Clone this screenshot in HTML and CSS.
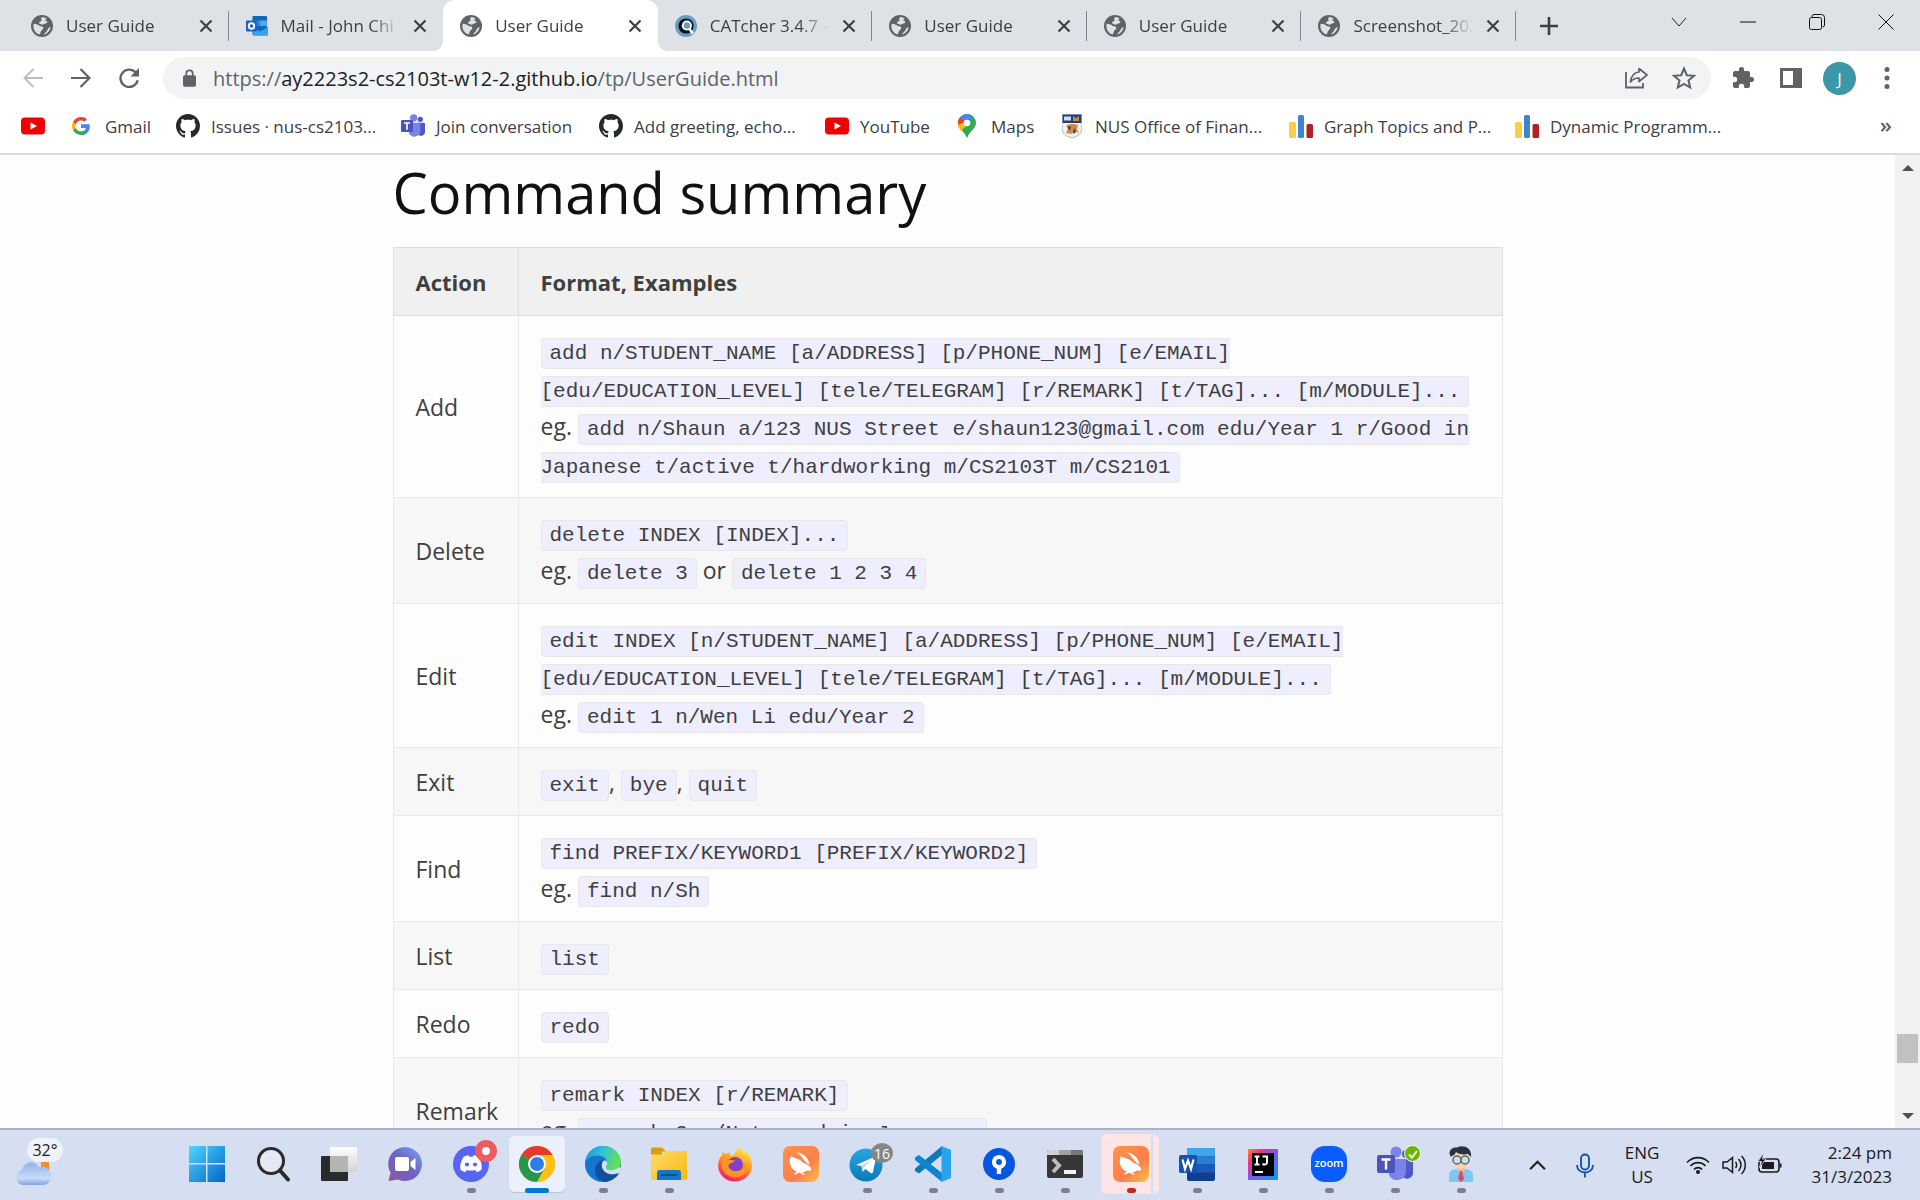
FILE: index.html
```html
<!DOCTYPE html>
<html lang="en">
<head>
<meta charset="utf-8">
<title>User Guide</title>
<link rel="stylesheet" href="styles.css">
</head>
<body>
<svg class="defs" aria-hidden="true">
  <defs>
    <linearGradient id="gWin" x1="0" y1="0" x2="1" y2="1"><stop offset="0" stop-color="#4fd6ff"/><stop offset="1" stop-color="#0067c8"/></linearGradient>
    <linearGradient id="gBlue" x1="0" y1="0" x2="0" y2="1"><stop offset="0" stop-color="#2aa5e0"/><stop offset="1" stop-color="#0a7ab8"/></linearGradient>
    <linearGradient id="gChat" x1="0" y1="1" x2="1" y2="0"><stop offset="0" stop-color="#8a5aa8"/><stop offset=".5" stop-color="#6a62c4"/><stop offset="1" stop-color="#78a8f5"/></linearGradient>
    <linearGradient id="gCloud" x1="0" y1="0" x2="0" y2="1"><stop offset="0" stop-color="#8fb2ee"/><stop offset=".7" stop-color="#c9dcf8"/><stop offset="1" stop-color="#7fa4e8"/></linearGradient>
    <linearGradient id="gFox" x1="0.7" y1="0" x2="0.3" y2="1"><stop offset="0" stop-color="#fff14a"/><stop offset=".45" stop-color="#ff9a1f"/><stop offset="1" stop-color="#f0146a"/></linearGradient>
    <linearGradient id="gEdge" x1="0" y1="0" x2="1" y2="0.3"><stop offset="0" stop-color="#1b8fe0"/><stop offset=".5" stop-color="#2fc1d6"/><stop offset="1" stop-color="#62e05a"/></linearGradient>
    <linearGradient id="gFold" x1="0" y1="0" x2="1" y2="1"><stop offset="0" stop-color="#ffdc6a"/><stop offset="1" stop-color="#f8b80e"/></linearGradient>
    <linearGradient id="gBird" x1="0" y1="0" x2="1" y2="1"><stop offset="0" stop-color="#ff9448"/><stop offset=".6" stop-color="#fb7f4b"/><stop offset="1" stop-color="#ffc04a"/></linearGradient>
    <linearGradient id="gIJ" x1="0" y1="0" x2="1" y2="1"><stop offset="0" stop-color="#ff8a1e"/><stop offset=".25" stop-color="#f0308a"/><stop offset=".5" stop-color="#7a5af0"/><stop offset="1" stop-color="#0a9af5"/></linearGradient>
    <linearGradient id="gWhite" x1="0" y1="0" x2="0" y2="1"><stop offset="0" stop-color="#fff"/><stop offset="1" stop-color="#d4d4d4"/></linearGradient>
    <symbol id="globe" viewBox="0 0 24 24"><circle cx="12" cy="12" r="12" fill="#5f6368"/><path d="M3 9.5c3 0 5 1 6.500 2.500 2 .3 3.500.5 4 2-.3 2.200-2.500 2.500-3 4.500-.4 1.300-.6 2-1.200 2.800C5.300 20 2.600 16.500 2.600 12c0-.9.200-1.700.4-2.500zM11.500 2.600c1.800-.2 4 .2 5.500 1.200-.4 1-1.600 1.300-2 2.200 1.500 0 2.800.500 3 1.900-1 1.400-3 1.100-4.200 2.300C12.600 11.200 11 9.900 9.300 9.600 8 8 9.400 7 11 6.600c1.500-.6-.6-1.600.5-4zM21.400 13c-.4 4-3.400 7.400-7.200 8.200 1.200-2 2.600-2.400 3.400-4.200.6-1.700 1.500-3.600 3.800-4z" fill="#dee1e6"/></symbol>
    <symbol id="x" viewBox="0 0 14 14"><path d="M1.500 1.500l11 11M12.500 1.500l-11 11" stroke="#3c4043" stroke-width="2.200" fill="none"/></symbol>
    <symbol id="github" viewBox="0 0 16 16"><path fill="#24292f" d="M8 0C3.580 0 0 3.580 0 8c0 3.540 2.290 6.530 5.470 7.590.4.070.55-.17.55-.38 0-.19-.01-.82-.01-1.490-2.010.37-2.530-.49-2.690-.94-.09-.23-.48-.94-.82-1.130-.28-.15-.68-.52-.01-.53.63-.01 1.080.58 1.230.82.72 1.210 1.870.87 2.330.66.070-.52.280-.87.510-1.070-1.780-.2-3.640-.89-3.640-3.950 0-.87.310-1.590.82-2.150-.08-.2-.36-1.020.080-2.120 0 0 .67-.21 2.200.82.64-.18 1.320-.27 2-.27s1.360.09 2 .27c1.530-1.040 2.200-.82 2.200-.82.44 1.100.16 1.920.080 2.120.51.56.82 1.270.82 2.150 0 3.070-1.870 3.750-3.650 3.950.29.25.54.73.54 1.480 0 1.070-.01 1.930-.01 2.200 0 .21.150.46.55.38A8.010 8.010 0 0 0 16 8c0-4.420-3.580-8-8-8z"/></symbol>
    <symbol id="yt" viewBox="0 0 24 24"><rect y="3.500" width="24" height="17" rx="4" fill="#f00000"/><path d="M9.500 8.500v7l6.500-3.500z" fill="#fff"/></symbol>
    <symbol id="teams" viewBox="0 0 36 36"><circle cx="29" cy="8" r="4" fill="#5059c9"/><circle cx="19" cy="6" r="5.500" fill="#7b83eb"/><path d="M24 13h10a2 2 0 0 1 2 2v10a6 6 0 0 1-12 3z" fill="#5059c9"/><path d="M12 13h17v13a9 9 0 0 1-17 3z" fill="#7b83eb"/><rect y="9" width="18" height="18" rx="2" fill="#4b53bc"/><path d="M4.500 13.500h9M9 13.500v10" stroke="#fff" stroke-width="2.400"/></symbol>
    <symbol id="bars" viewBox="0 0 24 24"><rect y="8" width="7" height="16" rx="1.500" fill="#f5cf4c"/><rect x="9" y="1" width="6" height="23" rx="1.500" fill="#3d86cc"/><rect x="17.500" y="10" width="6.500" height="14" rx="1.500" fill="#b31f24"/></symbol>
    <symbol id="bird" viewBox="0 0 36 36"><rect width="36" height="36" rx="7" fill="url(#gBird)"/><path d="M7.500 10.500C12 12 17 13 20.500 17c2 .8 4.500 1.600 6 3.200 1.500 1.300 2 3 1.500 4.300-1.500.2-2.700-.3-4 .2-1.800.9-3 1.500-4.800 1.400l3 2.900c-2.500-.3-4.500-1.400-6-2.500-1.800 1.400-3.700 2.200-5.700 1.600 1.500-.6 2.500-1.400 3-2.500C7.500 23 5.500 17 7.500 10.500z" fill="#fff"/><path d="M13.500 6.500C20 7 25.500 11.500 26.500 18.500 21.500 17 20.500 10.500 13.500 6.500z" fill="#fff"/></symbol>
  </defs>
</svg>

<header class="browser">
  <div class="strip">
    <nav class="tabs" aria-label="Tabs">
      <div class="tab"><svg class="fav"><use href="#globe"/></svg><span class="tab-name">User Guide</span><button class="close" aria-label="Close tab"><svg><use href="#x"/></svg></button></div>
      <div class="tab bare"><svg class="fav" viewBox="0 0 24 24"><rect x="7" y="1" width="16" height="21" rx="1.500" fill="#1066b8"/><path d="M15 6h8v6h-8z" fill="#50a8ec"/><path d="M7 6h8v6H7z" fill="#2b88d8"/><path d="M7 13l8 5 9-5v9.500H8z" fill="#3ba3ea"/><rect y="6" width="12" height="12" rx="1" fill="#1b62c4"/><circle cx="6" cy="12" r="3" fill="none" stroke="#fff" stroke-width="2"/></svg><span class="tab-name">Mail - John Chi</span><button class="close" aria-label="Close tab"><svg><use href="#x"/></svg></button></div>
      <div class="tab active"><svg class="fav"><use href="#globe"/></svg><span class="tab-name">User Guide</span><button class="close" aria-label="Close tab"><svg><use href="#x"/></svg></button></div>
      <div class="tab"><svg class="fav" viewBox="0 0 24 24"><circle cx="12" cy="12" r="12" fill="#6b9cc4"/><circle cx="12" cy="12" r="6.500" fill="none" stroke="#111" stroke-width="3.600"/><circle cx="13" cy="11.500" r="4.500" fill="#6b9cc4" stroke="#fff" stroke-width="2"/><path d="M15.500 15l4 5" stroke="#fff" stroke-width="3"/></svg><span class="tab-name">CATcher 3.4.7 -</span><button class="close" aria-label="Close tab"><svg><use href="#x"/></svg></button></div>
      <div class="tab"><svg class="fav"><use href="#globe"/></svg><span class="tab-name">User Guide</span><button class="close" aria-label="Close tab"><svg><use href="#x"/></svg></button></div>
      <div class="tab"><svg class="fav"><use href="#globe"/></svg><span class="tab-name">User Guide</span><button class="close" aria-label="Close tab"><svg><use href="#x"/></svg></button></div>
      <div class="tab"><svg class="fav"><use href="#globe"/></svg><span class="tab-name">Screenshot_202</span><button class="close" aria-label="Close tab"><svg><use href="#x"/></svg></button></div>
    </nav>
    <button class="new-tab" aria-label="New tab"><svg viewBox="0 0 18 18"><path d="M9 0v18M0 9h18" stroke="#3c4043" stroke-width="2.600"/></svg></button>
    <div class="win">
      <button aria-label="Search tabs"><svg viewBox="0 0 16 16"><path d="M1 4l7 8 7-8" stroke="#222" fill="none"/></svg></button>
      <button aria-label="Minimize"><svg viewBox="0 0 16 16"><path d="M0 8h16" stroke="#111"/></svg></button>
      <button aria-label="Restore"><svg viewBox="0 0 16 16"><rect x=".5" y="3.500" width="12" height="12" rx="2" stroke="#111" fill="none"/><path d="M3 3V2.500A2 2 0 0 1 5 .5h7.500a3 3 0 0 1 3 3V11a2 2 0 0 1-2 2" stroke="#111" fill="none"/></svg></button>
      <button aria-label="Close"><svg viewBox="0 0 16 16"><path d="M.5.5l15 15M15.500.5l-15 15" stroke="#111"/></svg></button>
    </div>
  </div>

  <div class="toolbar">
    <button class="nav-btn" aria-label="Back"><svg viewBox="0 0 20 20"><path d="M20 10H2M10.500 1L1.500 10l9 9" stroke="#bbbdc0" stroke-width="2" fill="none"/></svg></button>
    <button class="nav-btn" aria-label="Forward"><svg viewBox="0 0 20 20"><path d="M0 10h18M9.500 1l9 9-9 9" stroke="#5f6368" stroke-width="2.200" fill="none"/></svg></button>
    <button class="nav-btn" aria-label="Reload"><svg viewBox="0 0 20 20"><path d="M17.500 5.500A8.700 8.700 0 1 0 18.700 12.300" stroke="#5f6368" stroke-width="2.400" fill="none"/><path d="M20 0v8.500h-8.500z" fill="#5f6368"/></svg></button>
    <div class="omnibox">
      <svg class="lock" viewBox="0 0 12 16"><rect y="5.500" width="12" height="10.500" rx="1.500" fill="#5f6368"/><path d="M3 6V4a3 3 0 0 1 6 0v2" stroke="#5f6368" stroke-width="1.600" fill="none"/></svg>
      <a class="url" href="#">https://<span class="host">ay2223s2-cs2103t-w12-2.github.io</span>/tp/UserGuide.html</a>
      <button class="tool" aria-label="Share"><svg viewBox="0 0 24 24"><path d="M2 6v15.500h17V17" stroke="#5f6368" stroke-width="1.800" fill="none"/><path d="M15 2.500l8 6.500-8 6.500V12c-4 0-6.500 1.300-8.500 4C7 10.500 10 6.500 15 6z" stroke="#5f6368" stroke-width="1.700" fill="none" stroke-linejoin="round"/></svg></button>
      <button class="tool" aria-label="Bookmark this tab"><svg viewBox="0 0 24 24"><path d="M12 2.500l2.800 6.700 7.200.6-5.500 4.700 1.700 7L12 17.800l-6.200 3.700 1.700-7L2 9.800l7.200-.6z" stroke="#5f6368" stroke-width="2" fill="none"/></svg></button>
    </div>
    <button class="ext" aria-label="Extensions"><svg viewBox="0 0 24 24"><path fill="#5f6368" d="M20.500 11H19V7a2 2 0 0 0-2-2h-4V3.500a2.500 2.500 0 0 0-5 0V5H4a2 2 0 0 0-2 2v3.800h1.500a2.700 2.700 0 0 1 0 5.400H2V20a2 2 0 0 0 2 2h3.800v-1.500a2.700 2.700 0 0 1 5.400 0V22H17a2 2 0 0 0 2-2v-4h1.500a2.500 2.500 0 0 0 0-5z"/></svg></button>
    <button class="ext" aria-label="Side panel"><svg viewBox="0 0 24 24"><path fill="#5f6368" fill-rule="evenodd" d="M1 2h22v20H1zM4 5v14h10V5z"/></svg></button>
    <button class="ext avatar" aria-label="Profile">J</button>
    <button class="ext" aria-label="Menu"><svg viewBox="0 0 24 24"><g fill="#5f6368"><circle cx="12" cy="3.500" r="2.500"/><circle cx="12" cy="12" r="2.500"/><circle cx="12" cy="20.500" r="2.500"/></g></svg></button>
  </div>

  <nav class="bookmarks" aria-label="Bookmarks">
    <a href="#" aria-label="YouTube home"><svg><use href="#yt"/></svg></a>
    <a href="#" class="narrow"><svg viewBox="0 0 18 18"><path d="M17.600 7.300H9v3.600h5c-.5 2.200-2.400 3.600-5 3.600v3.500c5 0 8.800-3.300 8.800-8.800 0-.7-.1-1.300-.2-1.900z" fill="#4285f4"/><path d="M.9 13.100C2.500 16 5.500 18 9 18c2.400 0 4.500-.8 6-2.200l-2.900-2.300c-2.400 1.900-7 1.300-8.300-2.700z" fill="#34a853"/><path d="M3.800 10.800a5.500 5.500 0 0 1 0-3.600L.9 4.900a9 9 0 0 0 0 8.200z" fill="#fbbc05"/><path d="M15 2.300C11.500-1.200 4-.8.900 4.900l2.900 2.300C5 3.300 9.800 2.200 12.500 4.800z" fill="#ea4335"/></svg><span>Gmail</span></a>
    <a href="#"><svg><use href="#github"/></svg><span>Issues · nus-cs2103...</span></a>
    <a href="#"><svg><use href="#teams"/></svg><span>Join conversation</span></a>
    <a href="#"><svg><use href="#github"/></svg><span>Add greeting, echo...</span></a>
    <a href="#"><svg><use href="#yt"/></svg><span>YouTube</span></a>
    <a href="#" class="narrow"><svg viewBox="0 0 18 24"><path d="M9 0a9 9 0 0 1 9 9c0 5.500-6 7.500-9 15C6 16.500 0 14.500 0 9a9 9 0 0 1 9-9z" fill="#34a853"/><path d="M2 3.500A9 9 0 0 1 15.800 3L9 9z" fill="#4285f4"/><path d="M2 3.300L7 8 1.500 14A9 9 0 0 1 2 3.300z" fill="#ea4335"/><path d="M10 10l-7 7C1 14.500 0 12.500.2 10.500L5 9z" fill="#fbbc04"/><circle cx="9" cy="9" r="3.300" fill="#fff"/></svg><span>Maps</span></a>
    <a href="#" class="crest"><svg viewBox="0 0 20 24"><path d="M0 0h20v14c0 6-5 8.500-10 10C5 22.500 0 20 0 14z" fill="#f2f2f0" stroke="#9aa4b8" stroke-width=".8"/><path d="M.5.5h19V9H.5z" fill="#21427c"/><path d="M2 2.500h7v4H2z" fill="#d8dde6"/><path d="M11 2l3 2 3-2v5h-6z" fill="#c98645"/><path d="M4 12c4-3 9-2 12-1l-1 4 2 4-4-2-4 3-5-1 2-4z" fill="#d8893c"/><path d="M6 12l3 1-2 4zM12 14l2 4-3 2z" fill="#1d3767"/></svg><span>NUS Office of Finan...</span></a>
    <a href="#"><svg><use href="#bars"/></svg><span>Graph Topics and P...</span></a>
    <a href="#"><svg><use href="#bars"/></svg><span>Dynamic Programm...</span></a>
    <button class="more" aria-label="More bookmarks">»</button>
  </nav>
</header>

<div class="viewport">
  <main class="page">
    <div class="column">
      <h1>Command summary</h1>
      <table>
        <colgroup><col class="c-action"><col></colgroup>
        <thead><tr><th>Action</th><th>Format, Examples</th></tr></thead>
        <tbody>
          <tr><td>Add</td><td><code>add n/STUDENT_NAME [a/ADDRESS] [p/PHONE_NUM] [e/EMAIL] [edu/EDUCATION_LEVEL] [tele/TELEGRAM] [r/REMARK] [t/TAG]... [m/MODULE]...</code><br>eg. <code>add n/Shaun a/123 NUS Street e/shaun123@gmail.com edu/Year 1 r/Good in Japanese t/active t/hardworking m/CS2103T m/CS2101</code></td></tr>
          <tr><td>Delete</td><td><code>delete INDEX [INDEX]...</code><br>eg. <code>delete 3</code> or <code>delete 1 2 3 4</code></td></tr>
          <tr><td>Edit</td><td><code>edit INDEX [n/STUDENT_NAME] [a/ADDRESS] [p/PHONE_NUM] [e/EMAIL] [edu/EDUCATION_LEVEL] [tele/TELEGRAM] [t/TAG]... [m/MODULE]...</code><br>eg. <code>edit 1 n/Wen Li edu/Year 2</code></td></tr>
          <tr><td>Exit</td><td><code>exit</code>, <code>bye</code>, <code>quit</code></td></tr>
          <tr><td>Find</td><td><code>find PREFIX/KEYWORD1 [PREFIX/KEYWORD2]</code><br>eg. <code>find n/Sh</code></td></tr>
          <tr><td>List</td><td><code>list</code></td></tr>
          <tr><td>Redo</td><td><code>redo</code></td></tr>
          <tr><td>Remark</td><td><code>remark INDEX [r/REMARK]</code><br>eg. <code>remark 2 r/Not good in Japanese</code></td></tr>
        </tbody>
      </table>
    </div>
  </main>
  <div class="scrollbar">
    <button aria-label="Scroll up"><svg viewBox="0 0 12 6"><path d="M6 0l6 6H0z" fill="#505050"/></svg></button>
    <div class="track"><div class="thumb"></div></div>
    <button aria-label="Scroll down"><svg viewBox="0 0 12 6"><path d="M6 6l6-6H0z" fill="#505050"/></svg></button>
  </div>
</div>

<footer class="taskbar">
  <button class="weather" aria-label="Weather, 32 degrees"><svg viewBox="0 0 36 28"><path d="M26 0h8v12h-8z" fill="#f58b2c"/><path d="M8 27a8 8 0 0 1-1-15.500C9 4 19 1 24 9c6-2 12 3 12 9s-4 9-8 9z" fill="url(#gCloud)"/></svg><span class="temp">32°</span></button>
  <div class="apps">
    <button class="app" aria-label="Start"><svg viewBox="0 0 36 36"><path d="M0 0h17v17H0zM18.500 0H36v17H18.500zM0 18.500h17V36H0zM18.500 18.500H36V36H18.500z" fill="url(#gWin)"/></svg></button>
    <button class="app" aria-label="Search"><svg viewBox="0 0 36 36"><circle cx="16" cy="15" r="12.500" fill="#e4e9f5" stroke="#2b2b2b" stroke-width="3"/><path d="M25 24.500l8 9" stroke="#2b2b2b" stroke-width="4" stroke-linecap="round"/></svg></button>
    <button class="app" aria-label="Task view"><svg viewBox="0 0 36 36"><rect y="10" width="27" height="25" rx="1" fill="#2b2b2b"/><rect x="9" y="1" width="27" height="25" rx="1" fill="url(#gWhite)"/><path d="M9 10h18v16H9z" fill="#b4b4b4"/></svg></button>
    <button class="app" aria-label="Chat"><svg viewBox="0 0 36 36"><path d="M18 1a17 17 0 1 1-7 32.500L1.500 35l2-8.500A17 17 0 0 1 18 1z" fill="url(#gChat)"/><rect x="8" y="11" width="14" height="14" rx="2" fill="#fff"/><path d="M23.500 16l5-4v12l-5-4z" fill="#fff"/></svg></button>
    <button class="app run" aria-label="Discord"><svg viewBox="0 0 36 36"><circle cx="18" cy="18" r="18" fill="#5865f2"/><path d="M10.500 11c2-1 3.500-1.500 5-1.700l.8 1.400h3.400l.8-1.400c1.500.2 3 .7 5 1.700 2.500 4 3.700 8 3.200 12.500-1.700 1.400-3.500 2.200-5.200 2.600l-1.300-2.200c-2.800.8-5.600.8-8.400 0l-1.300 2.200c-1.700-.4-3.500-1.200-5.200-2.600C6.800 19 8 15 10.500 11z" fill="#fff"/><circle cx="14" cy="18.500" r="2.100" fill="#5865f2"/><circle cx="22" cy="18.500" r="2.100" fill="#5865f2"/></svg><span class="badge dot"></span></button>
    <button class="app run current" aria-label="Chrome"><svg viewBox="0 0 36 36"><circle cx="18" cy="18" r="18" fill="#fbc116"/><path d="M18 18L2.400 9A18 18 0 0 1 33.600 9z" fill="#e33b2e"/><path d="M33.600 9H18v9z" fill="#e33b2e"/><path d="M2.400 9A18 18 0 0 0 18 36l7.800-13.500L18 18z" fill="#279847"/><path d="M18 36l8-13.500L18 18V9h15.600A18 18 0 0 1 18 36z" fill="#fbc116"/><circle cx="18" cy="18" r="9" fill="#fff"/><circle cx="18" cy="18" r="7" fill="#2f7cee"/></svg></button>
    <button class="app run" aria-label="Edge"><svg viewBox="0 0 36 36"><circle cx="18" cy="18" r="18" fill="#1375cf"/><path d="M0 17C1 7 9 0 18 0c11 0 18 8 18 16 0 6-5 8.500-9 8.500-5 0-6-2-6-3.500 0-1 1.500-2 1.500-4.500C22.500 13 18 9.500 12 9.500 6 9.500 1.500 13 0 17z" fill="url(#gEdge)"/><path d="M17 14c-4 2-7 6-7 11s4 10 10 11c6-.5 11-4 14-8.500-7 3-16 .5-17-7z" fill="#12509c"/><path d="M21 14.500c-4-1-5.500 5-3 9 3 5 10 6 16.500 3L36 22l-2-1c-3 4-13 4.500-13 0 0-1 1.500-2 1.500-4.500z" fill="#d6dff2"/></svg></button>
    <button class="app run" aria-label="File Explorer"><svg viewBox="0 0 36 36"><path d="M0 3.500a2 2 0 0 1 2-2h9l4 4h-4v4H0z" fill="#dc9d08"/><path d="M0 8.500h11l4-3.500h21v27a2 2 0 0 1-2 2H2a2 2 0 0 1-2-2z" fill="url(#gFold)"/><path d="M6 34v-7a3 3 0 0 1 3-3h18a3 3 0 0 1 3 3v7z" fill="#1477c4"/><path d="M11 29h14" stroke="#0a4f96" stroke-width="2" stroke-linecap="round"/></svg></button>
    <button class="app" aria-label="Firefox"><svg viewBox="0 0 36 36"><path d="M22 0c2 3 3 5 5 7 1-1 1-1.500 1-2 5 4 7 9 7 14a17 16 0 0 1-34 1C1 15 3 11 5 9l1-3 3 2c1-1 2-1.500 3.500-1.500L14 10c3-1 6-5 8-10z" fill="url(#gFox)"/><circle cx="18" cy="19" r="8" fill="#8340c8"/><path d="M5 13c5-1 8 2 13 1-1 3-4 3-6 4-2 4 3 8 8 7 5 0 8-5 6-10 5 4 4 12-2 15-8 4-18-1-19-9z" fill="#ff9324"/></svg></button>
    <button class="app" aria-label="Swift app"><svg><use href="#bird"/></svg></button>
    <button class="app run" aria-label="Telegram"><svg viewBox="0 0 36 36"><circle cx="17" cy="19" r="16.500" fill="url(#gBlue)"/><path d="M7 19l18-8c1.500-.5 2 .3 1.700 1.800L24 26c-.3 1.300-1.200 1.500-2.200 1l-5.500-4-2.700 2.700-1-5.700z" fill="#fff"/><path d="M12.600 20l10-6.200-8 7.700-1 4.200z" fill="#b9d8ec"/></svg><span class="badge count">16</span></button>
    <button class="app run" aria-label="Visual Studio Code"><svg viewBox="0 0 36 36"><path d="M27 0v9L4 27.500 0 25v-2.500z" fill="#0f7ab8"/><path d="M27 36v-9L4 9 0 11.500V14z" fill="#0b85cf"/><path d="M26.500 0L36 4v28l-9.500 4z" fill="#2aa3ee"/></svg></button>
    <button class="app run" aria-label="Sourcetree"><svg viewBox="0 0 36 36"><circle cx="18" cy="18" r="16" fill="#0756df"/><circle cx="18" cy="16" r="5" fill="none" stroke="#fff" stroke-width="4.200"/><path d="M18 19v9" stroke="#fff" stroke-width="4.400"/></svg></button>
    <button class="app run" aria-label="Terminal"><svg viewBox="0 0 36 36"><rect y="4" width="36" height="28" rx="2" fill="#373737"/><path d="M2 4h10v5H0V6a2 2 0 0 1 2-2z" fill="#d0d0d0"/><path d="M12 4h12v5H12z" fill="#a2a2a2"/><path d="M24 4h10a2 2 0 0 1 2 2v3H24z" fill="#777"/><path d="M6 13l6 6.500L6 26" stroke="#bdbdbd" stroke-width="4" fill="none"/><path d="M17 26h12" stroke="#f0f0f0" stroke-width="4"/></svg></button>
    <button class="app run alert" aria-label="Swift app, needs attention"><svg><use href="#bird"/></svg></button>
    <button class="app run" aria-label="Word"><svg viewBox="0 0 36 36"><rect x="8" y="2" width="28" height="33" rx="2" fill="#103f91"/><path d="M10 2h24a2 2 0 0 1 2 2v6.500H8V4a2 2 0 0 1 2-2z" fill="#41a5ee"/><path d="M8 10.500h28v8H8z" fill="#2b7cd3"/><path d="M8 18.500h28v8H8z" fill="#185abd"/><rect y="9" width="18" height="18" rx="2" fill="#1552b0"/><path d="M3.500 13.500L6 23l3-8.500 3 8.500 2.500-9.500" stroke="#fff" stroke-width="2.200" fill="none"/></svg></button>
    <button class="app run" aria-label="IntelliJ IDEA"><svg viewBox="0 0 36 36"><path d="M3 3h30v31H3z" fill="url(#gIJ)"/><path d="M7 7h22v23H7z" fill="#000"/><path d="M9.500 10.500h5M12 10.500v8M9.500 18.500h5M17.500 10.500H22v6c0 2-2.500 2.500-4.500 1.500" stroke="#fff" stroke-width="2" fill="none"/><path d="M10 26h8" stroke="#fff" stroke-width="2"/></svg></button>
    <button class="app run" aria-label="Zoom"><span class="zoom">zoom</span></button>
    <button class="app run" aria-label="Microsoft Teams"><svg><use href="#teams"/></svg><span class="badge ok"><svg viewBox="0 0 12 12"><path d="M2 6.500l3 3 5-6.500" stroke="#fff" stroke-width="2" fill="none"/></svg></span></button>
    <button class="app run" aria-label="Assistant"><svg viewBox="0 0 36 36"><path d="M6 36V29c0-4 4-6 8-6h8c4 0 8 2 8 6v7z" fill="#7cc8f5"/><path d="M14 20h8v4l-4 4-4-4z" fill="#f2b596"/><path d="M10 8h16v7a8 8 0 0 1-16 0z" fill="#fbd0b4"/><path d="M8 11C4 5 9 1 14 1.500 20-1.500 29 1 28 11l-3-3c-5 1-10 0-12-2-1 3-3 3-5 5z" fill="#263542"/><circle cx="14" cy="14" r="4" fill="#cfdde6" stroke="#5a6770" stroke-width="1.500"/><circle cx="22" cy="14" r="4" fill="#cfdde6" stroke="#5a6770" stroke-width="1.500"/><path d="M17 25h2l2 8-3 3-3-3z" fill="#e04a5f"/></svg></button>
  </div>
  <div class="tray">
    <button class="t-chev" aria-label="Hidden icons"><svg viewBox="0 0 16 16"><path d="M1 11.500l7-7 7 7" stroke="#222" stroke-width="2" fill="none"/></svg></button>
    <button class="t-mic" aria-label="Microphone"><svg viewBox="0 0 18 24"><rect x="5" y="1" width="8" height="15" rx="4" stroke="#0f4fa8" stroke-width="1.800" fill="none"/><path d="M1 11.500c0 10 16 10 16 0M9 19v5" stroke="#0f4fa8" stroke-width="1.800" fill="none"/></svg></button>
    <button class="t-lang">ENG<br>US</button>
    <button class="t-status" aria-label="Network, volume and battery">
      <svg viewBox="0 0 24 24"><g stroke="#1a1a1a" stroke-width="1.600" fill="none"><path d="M1 9.500c6-6.500 16-6.500 22 0M4.500 13c4-4.500 11-4.500 15 0M8 16.500c2-2.500 6-2.500 8 0"/></g><circle cx="12" cy="19" r="2" fill="#1a1a1a"/></svg>
      <svg viewBox="0 0 24 24"><g stroke="#1a1a1a" stroke-width="1.500" fill="none"><path d="M1 9v6h4l5.500 4.500v-15L5 9zM13.500 9c1.500 1.500 1.500 4.500 0 6M16.500 6c3.300 3.500 3.300 8.500 0 12M19.500 3c5 5 5 13 0 18"/></g></svg>
      <svg viewBox="0 0 24 24"><rect x="1" y="6" width="20" height="13" rx="3" stroke="#1a1a1a" stroke-width="1.600" fill="none"/><path d="M4 9h11l-3 7H4zM22 10.500h1.500v4H22zM12 9h4v7H9z" fill="#1a1a1a"/><path d="M5.500 0L0 8.500h3.500l-2 6L8 6H4.500z" fill="#1a1a1a" stroke="#d6dff2" stroke-width=".8"/></svg>
    </button>
    <button class="t-clock">2:24 pm<br>31/3/2023</button>
  </div>
</footer>
</body>
</html>
```
FILE: styles.css
```css
* { box-sizing: border-box; }
body {
  margin: 0;
  height: 100vh;
  display: flex;
  flex-direction: column;
  overflow: hidden;
  background: #fdfdfd;
  font-family: "Open Sans", "Noto Sans", sans-serif;
  color: #3c4043;
}
.defs { position: absolute; width: 0; height: 0; }
button { border: 0; padding: 0; background: none; font: inherit; color: inherit; display: flex; align-items: center; justify-content: center; }
a { color: inherit; text-decoration: none; }
svg { flex: none; }

/* tab strip */
.strip { display: flex; height: 51px; background: #dee1e6; padding-left: 14px; }
.tabs { display: grid; grid-template-columns: repeat(7, 1fr); flex: 0 1 1502px; min-width: 0; }
.tab { display: flex; align-items: center; gap: 13px; padding: 0 16px 0 17px; font-size: 17px; min-width: 0;
  background: linear-gradient(#80868b, #80868b) right center / 1px 30px no-repeat; }
.tab.bare, .tab.active { background-image: none; }
.tab.active { position: relative; background: #fff; border-radius: 12px 12px 0 0; }
.tab.active::before, .tab.active::after { content: ""; position: absolute; bottom: 0; width: 10px; height: 10px; }
.tab.active::before { left: -10px; background: radial-gradient(circle at 0 0, #dee1e6 10px, #fff 10px); }
.tab.active::after { right: -10px; background: radial-gradient(circle at 100% 0, #dee1e6 10px, #fff 10px); }
.fav { width: 22px; height: 22px; }
.tab-name { flex: 1; min-width: 0; overflow: hidden; white-space: nowrap;
  mask-image: linear-gradient(to right, #000 calc(100% - 30px), transparent); }
.close { width: 14px; }
.close svg { width: 14px; height: 14px; }
.new-tab { width: 66px; }
.new-tab svg { width: 18px; height: 18px; }
.win { display: flex; margin-left: auto; }
.win button { width: 69px; height: 44px; }
.win svg { width: 16px; height: 16px; }

/* toolbar */
.toolbar { display: flex; align-items: center; height: 54px; padding: 0 9px; background: #fff; }
.nav-btn { width: 48px; height: 42px; }
.nav-btn svg { width: 20px; height: 20px; }
.omnibox { flex: 1; display: flex; align-items: center; height: 42px; margin: 0 8px 0 10px; padding: 0 3px 0 20px; background: #f1f3f4; border-radius: 21px; }
.lock { width: 13px; height: 18px; margin-right: 17px; }
.url { flex: 1; font-size: 20px; color: #5f6368; white-space: nowrap; }
.host { color: #202124; }
.tool { width: 48px; }
.tool svg { width: 24px; height: 24px; }
.ext { width: 48px; }
.ext svg { width: 24px; height: 24px; }
.ext.avatar { width: 33px; height: 33px; margin: 0 7px 0 8px; border-radius: 50%; background: #3c97a8; color: #fff; font-size: 17px; }

/* bookmarks */
.bookmarks { display: grid; grid-template-columns: 51px 104px 225px 198px 226px 133px 104px 227px 226px 226px 1fr; align-items: center; height: 50px; padding: 0 20px 6px 21px; font-size: 17px; background: #fff; border-bottom: 2px solid #dadcdf; white-space: nowrap; }
.bookmarks a { display: flex; align-items: center; gap: 11px; }
.bookmarks svg { width: 24px; height: 24px; }
.bookmarks .narrow { gap: 15px; }
.bookmarks .narrow svg { width: 18px; }
.bookmarks .crest { gap: 13px; }
.bookmarks .crest svg { width: 20px; }
.more { justify-self: end; margin-right: 8px; font-size: 22px; font-weight: 600; line-height: 24px; padding-bottom: 4px; color: #5f6368; }

/* page */
.viewport { flex: 1; min-height: 0; display: flex; }
.page { flex: 1; overflow: hidden; background: #fdfdfd; }
.column { max-width: 1110px; margin: 0 auto; }
h1 { margin: 0 0 18px; font-size: 56px; line-height: 74px; font-weight: 400; color: #111; }
table { width: 100%; border-collapse: collapse; table-layout: fixed; font-size: 23px; line-height: 38px; color: #3f3f3f; border: 1px solid #e8e8e8; }
.c-action { width: 125px; }
th, td { padding: 15px 22px 14px; border: 1px solid #e8e8e8; text-align: left; }
th { background: #f0f0f0; border-color: #dedede; font-size: 22px; font-weight: 700; }
td { vertical-align: middle; }
tbody tr:nth-child(even) { background: #f7f7f7; }
code { font-family: "Liberation Mono", monospace; font-size: 21px; line-height: 24px; padding: 3px 8px; background: #eeeeff; border: 1px solid #e8e8e8; border-radius: 4px; }

/* scrollbar */
.scrollbar { width: 25px; display: flex; flex-direction: column; background: #f1f1f1; }
.scrollbar button { height: 25px; }
.scrollbar button svg { width: 12px; height: 6px; }
.track { flex: 1; display: flex; flex-direction: column; padding: 0 2px; }
.track::before { content: ""; flex: 191; }
.track::after { content: ""; flex: 9; }
.thumb { height: 29px; background: #c1c1c1; }

/* taskbar */
.taskbar { display: flex; align-items: center; height: 72px; background: #d6dff2; border-top: 2px solid #aab2c2; color: #1a1a1a; }
.weather { position: relative; width: 72px; height: 70px; margin-right: 102px; }
.weather svg { width: 36px; height: 28px; margin: 14px 6px 0 0; }
.temp { position: absolute; left: 27px; top: 8px; width: 36px; height: 24px; border-radius: 12px; background: #eef2fb; font-size: 16px; line-height: 24px; }
.apps { display: flex; }
.app { position: relative; width: 66px; height: 70px; padding-bottom: 2px; }
.app > svg { width: 36px; height: 36px; position: relative; }
.run::after { content: ""; position: absolute; left: 29px; bottom: 7px; width: 9px; height: 5px; border-radius: 3px; background: #7b808c; }
.current::before { content: ""; position: absolute; left: 5px; top: 6px; width: 56px; height: 56px; border-radius: 5px; background: #ebf0fa; box-shadow: 0 1px 1px #b8c2d8; }
.current::after { left: 21px; width: 24px; background: #0078d4; }
.alert::before { content: ""; position: absolute; left: 3px; top: 4px; width: 58px; height: 60px; border-radius: 7px; background: linear-gradient(to right, #fde5e6 50px, #d6dff2 50px, #d6dff2 52px, #fde5e6 52px); }
.alert::after { background: #c4261d; }
.badge { position: absolute; border-radius: 50%; display: flex; align-items: center; justify-content: center; }
.dot { right: 7px; top: 10px; width: 22px; height: 22px; background: #fff; border: 7px solid #ee5a5d; }
.count { right: 7px; top: 13px; width: 22px; height: 20px; background: #868686; color: #fff; font-size: 14px; }
.ok { right: 7px; top: 15px; width: 17px; height: 17px; background: #6bb700; border: 1px solid #fff; }
.ok svg { width: 12px; height: 12px; }
.zoom { width: 36px; height: 36px; border-radius: 14px; background: #0b5cff; color: #fff; font-size: 11px; font-weight: 600; line-height: 34px; text-align: center; }
.tray { display: flex; align-items: center; height: 70px; margin-left: auto; padding-right: 28px; font-size: 17px; line-height: 24px; white-space: nowrap; }
.t-chev { width: 46px; }
.t-chev svg { width: 17px; height: 17px; }
.t-mic { width: 50px; }
.t-mic svg { width: 18px; height: 25px; }
.t-lang { width: 64px; }
.t-status { width: 120px; gap: 12px; }
.t-status svg { width: 24px; height: 24px; }
.t-clock { width: 98px; text-align: right; justify-content: flex-end; }
```
